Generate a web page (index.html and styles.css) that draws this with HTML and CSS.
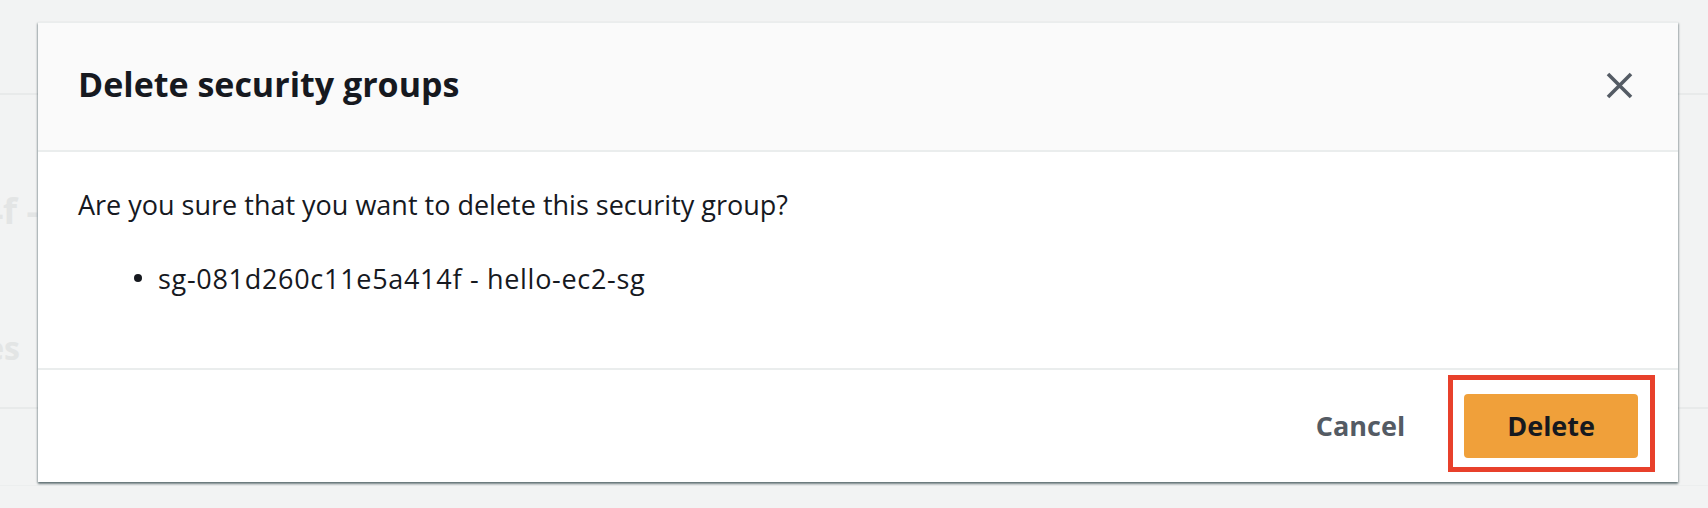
FILE: index.html
```html
<!DOCTYPE html>
<html lang="en">
<head>
<meta charset="utf-8">
<title>Delete security groups</title>
<link rel="stylesheet" href="styles.css">
</head>
<body>
<div class="page">
  <div class="bg-top"></div>
  <div class="bg-section">
    <div class="bg-clip bg-clip-wide"><span class="bg-heading">sg-081d260c11e5a414f -</span></div>
    <div class="bg-clip bg-clip-narrow bg-second"><span class="bg-heading bg-sub">Inbound rules</span></div>
  </div>
  <div class="bg-foot"></div>

  <div class="modal" role="dialog" aria-labelledby="modal-title">
    <div class="modal-header">
      <h2 class="modal-title" id="modal-title">Delete security groups</h2>
      <button class="close-btn" aria-label="Close">
        <svg width="27" height="27" viewBox="0 0 27 27" aria-hidden="true">
          <path d="M2 2 L25 25 M25 2 L2 25" stroke="#545b64" stroke-width="3.6" fill="none"/>
        </svg>
      </button>
    </div>
    <div class="modal-body">
      <p class="question">Are you sure that you want to delete this security group?</p>
      <ul class="group-list">
        <li class="group-item"><span class="dot"></span><span class="group-name">sg-081d260c11e5a414f - hello-ec2-sg</span></li>
      </ul>
    </div>
    <div class="modal-footer">
      <button class="btn btn-link">Cancel</button>
      <div class="highlight">
        <button class="btn btn-primary">Delete</button>
      </div>
    </div>
  </div>
</div>
</body>
</html>
```

FILE: styles.css
```css
* {
  box-sizing: border-box;
}

html, body {
  margin: 0;
  padding: 0;
}

body {
  background: #f2f3f3;
  font-family: "Open Sans", "Noto Sans", sans-serif;
  color: #16191f;
}

.page {
  position: relative;
  width: 1708px;
  height: 508px;
  overflow: hidden;
  background: #f2f3f3;
}

/* faded page content behind the dialog */
.bg-top {
  height: 95px;
  border-bottom: 2px solid #e8eaea;
}

.bg-section {
  height: 314px;
  padding-top: 96px;
  border-bottom: 2px solid #e8eaea;
}

.bg-clip {
  display: flex;
  justify-content: flex-end;
  overflow: hidden;
  white-space: nowrap;
}

.bg-clip-wide {
  width: 38px;
}

.bg-clip-narrow {
  width: 20px;
}

.bg-second {
  margin-top: 97px;
}

.bg-heading {
  font-size: 36px;
  font-weight: 700;
  line-height: 40px;
  color: #e3e5e5;
}

.bg-sub {
  font-size: 32px;
}

.bg-foot {
  height: 77px;
  border-bottom: 1px solid #eceeee;
}

/* dialog */
.modal {
  position: absolute;
  left: 38px;
  top: 22px;
  width: 1640px;
  background: #ffffff;
  box-shadow: 0 2px 2px 0 rgba(0, 28, 36, 0.45), 1px 1px 2px 0 rgba(0, 28, 36, 0.18), -1px 1px 2px 0 rgba(0, 28, 36, 0.18);
  border-top: 1px solid #eaeded;
}

.modal-header {
  display: flex;
  justify-content: space-between;
  align-items: flex-start;
  height: 129px;
  padding: 41px 45px 0 40px;
  background: #fafafa;
  border-bottom: 2px solid #eaeded;
}

.modal-title {
  margin: 0;
  font-size: 34px;
  font-weight: 700;
  line-height: 40px;
  color: #16191f;
}

.close-btn {
  display: flex;
  margin: 8px 0 0;
  padding: 0;
  border: 0;
  background: transparent;
  cursor: pointer;
}

.modal-body {
  height: 216px;
  padding: 33px 40px 0;
}

.question {
  margin: 0;
  font-size: 27px;
  line-height: 40px;
}

.group-list {
  margin: 34px 0 0;
  padding: 0 0 0 56px;
  list-style: none;
}

.group-item {
  display: flex;
  align-items: center;
  font-size: 27px;
  line-height: 40px;
}

.dot {
  width: 8px;
  height: 8px;
  margin: -2px 16px 0 0;
  border-radius: 50%;
  background: #16191f;
}

.group-name {
  letter-spacing: 0.7px;
}

.modal-footer {
  display: flex;
  justify-content: flex-end;
  align-items: flex-start;
  height: 114px;
  padding: 5px 23px 0 0;
  border-top: 2px solid #eaeded;
}

.btn {
  margin: 0;
  padding: 12px 43px;
  border: 0;
  border-radius: 4px;
  font-family: "Open Sans", "Noto Sans", sans-serif;
  font-size: 27px;
  font-weight: 700;
  line-height: 40px;
  cursor: pointer;
}

.btn-link {
  margin-top: 19px;
  background: transparent;
  color: #545b64;
}

.btn-primary {
  display: block;
  background: #f0a03a;
  color: #16191f;
}

.highlight {
  border: 5px solid #e8402b;
  padding: 14px 12px 9px 11px;
}
```
